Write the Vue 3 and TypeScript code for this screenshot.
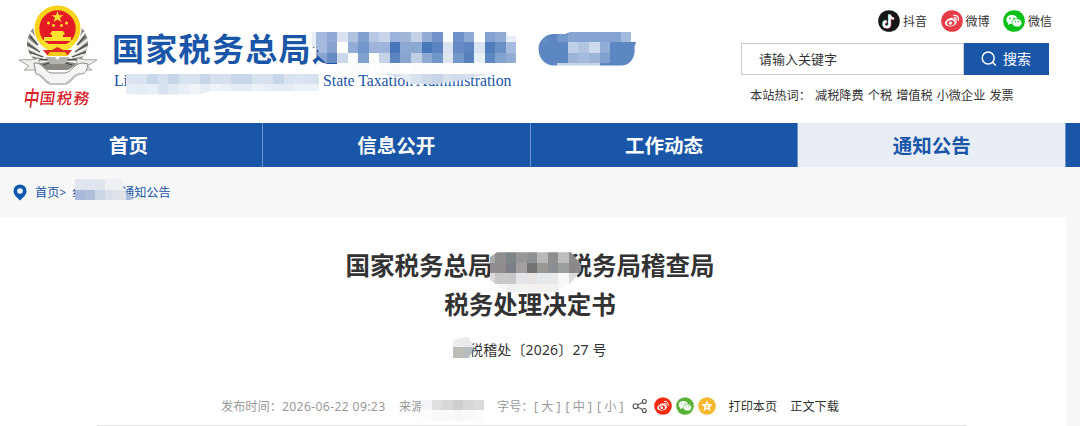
<script setup lang="ts">
interface Mosaic {
  id: string;
  x: number;
  y: number;
  cell: number;
  clip: string;
  rows: string[][];
}

interface SocialLink {
  icon: "douyin" | "weibo" | "wechat";
  color: string;
  label: string;
}

const socials: SocialLink[] = [
  { icon: "douyin", color: "#161616", label: "抖音" },
  { icon: "weibo", color: "#e73d48", label: "微博" },
  { icon: "wechat", color: "#0abf18", label: "微信" },
];

const hotWords = ["减税降费", "个税", "增值税", "小微企业", "发票"];

const navItems = [
  { label: "首页", active: false },
  { label: "信息公开", active: false },
  { label: "工作动态", active: false },
  { label: "通知公告", active: true },
];

const fontSizes = ["大", "中", "小"];

const mosaics: Mosaic[] = [
  {
    id: "site-name",
    x: 305.8,
    y: 31.5,
    cell: 10.52,
    clip: "M312 31.5H506L509 36H516V63H505L492 73L464 80L437 84H411L400 77L370 72H337V63H326L316 54L319 51L312 46Z",
    rows: [
      ["#e8eef7", "#a6b9dc", "#91a9d4", "#dae2f1", "#afc3e1", "#80a0d0", "#b7c8e4", "#c8d5ea", "#9bb3da", "#a0b7da", "#c4d1e7", "#92acd5", "#7193c9", "#fbfcfe", "#6d91c8", "#8faad4", "#fcfdfe", "#83a2d1", "#91abd5", "#e6edf7"],
      ["#e8eef7", "#a6b9dc", "#89a3d1", "#ffffff", "#91abd5", "#7497cb", "#9eb4da", "#9eb4da", "#4876ba", "#8da9d3", "#8ba8d2", "#4978ba", "#5b84c0", "#dbe3f1", "#648bc4", "#5c85c1", "#dae3f0", "#4f7dbc", "#6b90c6", "#a6bbdd"],
      ["#c7d4e9", "#88a5d1", "#648bc3", "#cbd8ea", "#fafcfe", "#80a1d0", "#fdfefe", "#c5d3e8", "#5c84bf", "#88a5d0", "#c1cfe4", "#8eaad2", "#7196c8", "#dde5f1", "#7497c9", "#5681bd", "#e9eff7", "#5d87c1", "#82a2d0", "#94add5"],
      ["#ffffff", "#ffffff", "#ffffff", "#fdfdfe", "#fbfcfd", "#fafbfd", "#ffffff", "#fdfdfe", "#fbfcfe", "#ffffff", "#fdfdfe", "#fdfdfe", "#fdfdfe", "#fcfdfe", "#fdfdfe", "#fdfdfe", "#fdfdfe", "#fdfdfe", "#fdfdfe", "#fdfdfe"],
      ["#ffffff", "#ffffff", "#ffffff", "#ffffff", "#ffffff", "#ffffff", "#cfdbeb", "#cfdbeb", "#d7e1ee", "#e5ebf5", "#d9e2ef", "#ced9ea", "#c6d3e8", "#d6dfed", "#d1dbeb", "#d4deed", "#dce4f0", "#eef2f8", "#ffffff", "#ffffff"],
    ],
  },
  {
    id: "latin-name",
    x: 126,
    y: 73.5,
    cell: 10.52,
    clip: "M126 73.5H319V91H212L198 94.5H125.5V77Z",
    rows: [
      ["#dbe5f1", "#dbe5f1", "#c8d6e9", "#d6e1ef", "#c7d5e9", "#d7e2ef", "#d7e2ef", "#c7d6e9", "#d6e1ef", "#d6e1ef", "#c7d6e8", "#c7d6e8", "#d8e3f0", "#d8e3f0", "#c7d5e8", "#d9e3f0", "#dbe5f1", "#d7e1ef", "#d8e2ef"],
      ["#e8eef6", "#e5ecf5", "#e8eef6", "#d9e3f0", "#e1e9f3", "#e8eef6", "#f0f4f9", "#e8eef6", "#eef3f9", "#eaf0f7", "#e5ecf5", "#e5ecf5", "#edf2f8", "#e8eef6", "#e5ecf5", "#e5ecf5", "#edf2f8", "#edf2f8", "#edf2f8"],
    ],
  },
  {
    id: "badge",
    x: 536,
    y: 31.5,
    cell: 10.6,
    clip: "M554 65.5C545 65.5 538.5 58 538.5 49S546 34 554 34H565L571 31.5H632V42H636L634.5 47C636 57 630 65.5 622 65.5Z",
    rows: [
      ["#668ec5", "#5c87c3", "#7297cb", "#86a4d2", "#84a3d2", "#84a3d2", "#84a3d2", "#84a3d2", "#a5bbdd", "#ffffff"],
      ["#5c87c3", "#5c87c3", "#5c87c3", "#bfcfe5", "#b0c3df", "#cddaeb", "#91add5", "#5c87c3", "#5c87c3", "#5c87c3"],
      ["#5c87c3", "#5c87c3", "#5c87c3", "#9bb4d8", "#a5bbdb", "#9bb4d8", "#80a0ce", "#5c87c3", "#5c87c3", "#5c87c3"],
      ["#5c87c3", "#5c87c3", "#c6d4e9", "#c6d4e9", "#c6d4e9", "#c6d4e9", "#5c87c3", "#5c87c3", "#5c87c3", "#5c87c3"],
    ],
  },
  {
    id: "crumb",
    x: 74.7,
    y: 179.3,
    cell: 10.2,
    clip: "M75 179.3H122.5V189.5L134 199L130 200H75Z",
    rows: [
      ["#dfe4ee", "#dfe4ee", "#e0e5ed", "#eef0f3", "#eef0f3", "#f5f5f6"],
      ["#a9b9db", "#b0bedb", "#ccd6e6", "#dce0e8", "#e0e2e8", "#acbbdd"],
    ],
  },
  {
    id: "heading",
    x: 484.5,
    y: 252.3,
    cell: 10.5,
    clip: "M497 252.3H571L581 264V271L570 283.5L557 292H504L490 279.5V257Z",
    rows: [
      ["#aaa9aa", "#918f91", "#7e8589", "#969797", "#8d9191", "#b8b8b8", "#8e8d8f", "#bdbfbf", "#8c8b8d", "#8c8b8d"],
      ["#918c91", "#8f8b8e", "#7c7e86", "#a5a09f", "#747473", "#9a9895", "#8a8f95", "#9ba09f", "#8c878b", "#8f898d"],
      ["#dcdbdc", "#c8c8c9", "#c8c8c9", "#e2e5ea", "#e7e4e1", "#e4e9ee", "#e8e9eb", "#f6f8f8", "#dfdcdf", "#dfdcdf"],
      ["#f5f5f5", "#f5f5f5", "#f1f1f1", "#f3f3f3", "#f1f1f1", "#f1f1f1", "#f1f1f1", "#f8f8f8", "#f8f8f8", "#f8f8f8"],
    ],
  },
  {
    id: "number",
    x: 452.5,
    y: 336.5,
    cell: 10.5,
    clip: "M453 340L468 336.5L474 347L469 358H452.5Z",
    rows: [
      ["#ececec", "#e9e9e9", "#ececec"],
      ["#bfbbb7", "#b8bdc0", "#d9d9d9"],
    ],
  },
  {
    id: "source",
    x: 421,
    y: 399.7,
    cell: 10.5,
    clip: "M421 399.7H484V421H421Z",
    rows: [
      ["#f3f5f8", "#dfdfdf", "#d8d8d8", "#ceced0", "#d8d8d8", "#dadcdc"],
      ["#fcfcfc", "#f8f8f8", "#f9f9f9", "#f7f7f7", "#f9f9f9", "#fbfbfb"],
    ],
  },
];
</script>

<template>
  <div class="page">
    <header class="header">
      <div class="brand">
        <svg class="emblem" viewBox="0 0 82 82" width="82" height="82">
          <path d="M15 24C3 40 10 54 29 66H50C69 55 76 39 64 24L58 50L40 60L21 50Z" fill="#8b8984" />
          <g fill="none" stroke="#f0efea" stroke-width="2.6" stroke-linecap="round">
            <path d="M13 29l6 8M10 36l10 8M10 44l13 6M14 51l13 3M21 58l12-2" />
            <path d="M66 29l-6 8M69 36l-10 8M69 44l-13 6M65 51l-13 3M58 58l-12-2" />
          </g>
          <g fill="none" stroke="#4b4946" stroke-width="1.3">
            <path d="M12 32l8 9M9 40l13 8M11 48l14 5M17 55l13 1M25 61l9-3" />
            <path d="M67 32l-8 9M70 40l-13 8M68 48l-14 5M62 55l-13 1M54 61l-9-3" />
          </g>
          <circle cx="39.500" cy="24.500" r="23" fill="#f8d319" />
          <circle cx="39.500" cy="24.500" r="18.200" fill="#e41b25" />
          <path d="m39.500 7 1.400 4.200h4.600l-3.600 2.600 1.400 4.200-3.800-2.600-3.800 2.600 1.400-4.200-3.600-2.600h4.600Z" fill="#fce12d" />
          <g fill="#fce12d">
            <circle cx="30.500" cy="19" r="1.500" />
            <circle cx="35.500" cy="21.500" r="1.400" />
            <circle cx="43.500" cy="21.500" r="1.400" />
            <circle cx="48.500" cy="19" r="1.500" />
            <path d="M34 27h11l2 3-2 1v2h8v4H26v-4h8v-2l-2-1Z" />
            <path d="M22 35l9 5h17l9-5-4 9-8 3-5.500-3-5.500 3-8-3Z" />
          </g>
          <path d="M25 46h9l5.500-3 5.500 3h9l-4 5-8 1h-5l-8-1Z" fill="#e12a23" />
          <path d="M32 48h15l3 4H29Z" fill="#f5ca18" />
          <path d="M28 53h9l2.500 3 2.500-3h9l-4 7H32Z" fill="#b5b3ad" />
          <path d="M1 56c7-1 11 1 20-2v12H6l5-4Z" fill="#eeeeeb" stroke="#a5a4a0" />
          <path d="M79 56c-7-1-11 1-20-2v12h15l-5-4Z" fill="#eeeeeb" stroke="#a5a4a0" />
          <path d="M16 59c9-1 11 9 17 10h14c7-1 9-10 18-10l5 1c-1 7-3 10-8 10-6 1-9 9-14 10H32c-6-1-8-10-14-10Z" fill="#f5f5f3" stroke="#8c8b87" />
          <path d="M18 70c7 0 8 8 14 9M62 70c-7 0-8 8-14 9" fill="none" stroke="#c0bfbc" stroke-width="2" />
        </svg>
        <div class="emblem-name">
          <span>中</span><span>国</span><span>税</span><span>務</span>
        </div>
      </div>
      <div class="site-title">
        <div class="site-name">国家税务总局辽</div>
        <div class="latin-name">
          <span class="latin-start">Li</span>
          <span>State Taxation Administration</span>
        </div>
      </div>
      <div class="tools">
        <ul class="socials">
          <li v-for="item in socials" :key="item.icon">
            <svg viewBox="0 0 22 22" width="22" height="22">
              <circle cx="11" cy="11" r="10.8" :fill="item.color" />
              <g v-if="item.icon === 'douyin'" fill="none" stroke-width="2.2">
                <path d="M11 4.2v9.6a2.9 2.9 0 1 1-3-2.8M11 4.5c.4 2.5 2 3.6 4.2 3.8" stroke="#48dce0" />
                <path d="M12.2 5v9.6a2.9 2.9 0 1 1-3-2.8M12.2 5.2c.4 2.5 2 3.6 4.2 3.8" stroke="#ed4b65" />
                <path d="M11.6 4.6v9.6a2.9 2.9 0 1 1-3-2.8M11.6 4.8c.4 2.5 2 3.6 4.2 3.8" stroke="#fff" />
              </g>
              <use v-else-if="item.icon === 'weibo'" href="#glyph-weibo" :color="item.color" />
              <use v-else href="#glyph-wechat" :color="item.color" />
            </svg>
            <span>{{ item.label }}</span>
          </li>
        </ul>
        <div class="search">
          <div class="search-input">请输入关键字</div>
          <div class="search-button">
            <svg viewBox="0 0 16 16" width="16" height="16" fill="none" stroke="#fff" stroke-width="1.5">
              <circle cx="7.2" cy="7" r="6" />
              <path d="m11.4 11.2 3.4 3.3" />
            </svg>
            <span>搜索</span>
          </div>
        </div>
        <div class="hot-words">
          <span class="hot-label">本站热词：</span>
          <span v-for="word in hotWords" :key="word">{{ word }}</span>
        </div>
      </div>
    </header>

    <nav class="nav">
      <div
        v-for="item in navItems"
        :key="item.label"
        class="nav-item"
        :class="{ active: item.active }"
      >
        {{ item.label }}
      </div>
    </nav>

    <div class="breadcrumb">
      <svg viewBox="0 0 14 17" width="14" height="17">
        <path d="M7 .4A6.5 6.5 0 0 0 .5 6.9C.5 11 4 13.5 7 16.4 10 13.5 13.5 11 13.5 6.9A6.5 6.5 0 0 0 7 .4Z" fill="#0d59ae" />
        <circle cx="7" cy="7" r="2.8" fill="#f7f7f7" />
      </svg>
      <span class="crumb-home">首页&gt;</span>
      <span class="crumb-hidden">纟</span>
      <span>通知公告</span>
    </div>

    <main class="article">
      <h1 class="heading">
        <span class="heading-line"><span>国家税务总局</span><span>税务局稽查局</span></span>
        <span>税务处理决定书</span>
      </h1>
      <div class="doc-number">税稽处〔2026〕27 号</div>
      <div class="meta">
        <span class="date">发布时间：<span class="date-value">2026-06-22 09:23</span></span>
        <span class="source">来源：</span>
        <span class="size-label">字号：</span>
        <span v-for="size in fontSizes" :key="size" class="size">[ {{ size }} ]</span>
        <svg class="share" viewBox="0 0 16 16" width="16" height="16" fill="none" stroke="#555" stroke-width="1.1">
          <circle cx="3.5" cy="8.2" r="2.4" />
          <circle cx="12.3" cy="3.5" r="2" />
          <circle cx="12.3" cy="12.5" r="2" />
          <path d="m5.7 7.1 4.8-2.6M5.7 9.3l4.8 2.3" />
        </svg>
        <svg class="share-icon" viewBox="0 0 22 22" width="18" height="18">
          <circle cx="11" cy="11" r="10.8" fill="#f72b12" />
          <use href="#glyph-weibo" color="#f72b12" />
        </svg>
        <svg class="share-icon" viewBox="0 0 22 22" width="18" height="18">
          <circle cx="11" cy="11" r="10.8" fill="#57b236" />
          <use href="#glyph-wechat" color="#57b236" />
        </svg>
        <svg class="share-icon" viewBox="0 0 22 22" width="18" height="18">
          <circle cx="11" cy="11" r="10.8" fill="#f6b82d" />
          <path d="m11 4.2 2 4.500 4.900.4-3.700 3.200 1.100 4.800-4.300-2.500-4.300 2.500 1.100-4.800-3.700-3.200 4.900-.4Z" fill="#fff" />
          <path d="M9.200 10.200h3.600l-3.200 2.800h3.400" fill="none" stroke="#f6b82d" stroke-width=".8" />
        </svg>
        <span class="action">打印本页</span>
        <span class="action">正文下载</span>
      </div>
    </main>

    <svg class="mosaics" viewBox="0 0 1080 426" width="1080" height="426">
      <defs>
        <g id="glyph-weibo">
          <path d="M9.3 8.1c1.5-.7 2.8-.4 2.5 1 2.4-.7 3.2.2 2.6 1.4 1.5.5 1.8 1.7.9 3.1-1.8 2.8-6.6 3.9-9.6 2.2-3.5-2-1.4-6 3.6-7.7Z" fill="#fff" />
          <ellipse cx="9.7" cy="13" rx="3.8" ry="2.7" fill="currentColor" transform="rotate(-9 9.7 13)" />
          <circle cx="9.4" cy="13.1" r="1.7" fill="#fff" />
          <path d="M12.7 5.4c3.1-.6 5.5 1.8 4.6 5M13 7.7c1.6-.3 2.6.6 2.3 2.1" fill="none" stroke="#fff" stroke-width="1.2" stroke-linecap="round" />
        </g>
        <g id="glyph-wechat">
          <path d="M9 5c-3.3 0-5.7 2-5.7 4.6 0 1.5.8 2.8 2 3.6l-.5 1.7 2-1c4 .9 7.7-1.2 7.8-4.3C14.6 7 12.2 5 9 5Z" fill="#fff" />
          <path d="M14 8.7c-2.9 0-5 1.8-5 4.1s2.1 4.1 5 4.1l1.3-.2 1.8 1-.4-1.5c1.4-.8 2.2-2 2.2-3.4 0-2.3-2.1-4.1-4.9-4.1Z" fill="#fff" stroke="currentColor" stroke-width=".7" />
          <g fill="currentColor">
            <circle cx="7" cy="8.4" r=".8" />
            <circle cx="10.8" cy="8.4" r=".8" />
            <circle cx="12.4" cy="11.8" r=".7" />
            <circle cx="15.7" cy="11.8" r=".7" />
          </g>
        </g>
        <clipPath v-for="m in mosaics" :id="`clip-${m.id}`" :key="m.id">
          <path :d="m.clip" />
        </clipPath>
      </defs>
      <g
        v-for="m in mosaics"
        :key="m.id"
        :clip-path="`url(#clip-${m.id})`"
        shape-rendering="crispEdges"
      >
        <template v-for="(row, r) in m.rows" :key="r">
          <rect
            v-for="(color, c) in row"
            :key="c"
            :x="m.x + c * m.cell"
            :y="m.y + r * m.cell"
            :width="m.cell"
            :height="m.cell"
            :fill="color"
          />
        </template>
      </g>
    </svg>
  </div>
</template>

<style>
body {
  background: #f7f7f7;
  overflow: hidden;
}
</style>

<style scoped>
.page {
  position: relative;
  width: 1080px;
  height: 426px;
  overflow: hidden;
  font-family: "Noto Sans", "Noto Sans CJK SC", sans-serif;
  font-size: 12px;
  color: #333;
}

.header {
  display: flex;
  height: 123px;
  background: #fff;
}

.brand {
  width: 112px;
  padding: 4px 0 0 18px;
  box-sizing: border-box;
}

.emblem {
  display: block;
}

.emblem-name {
  display: flex;
  margin: -3px 0 0 6px;
  width: 70px;
  color: #d9232b;
  font-family: "Noto Sans CJK SC", sans-serif;
  font-size: 15.5px;
  font-weight: 500;
  line-height: 28px;
  transform: skewX(-8deg);
}

.emblem-name span {
  width: 17px;
}

.emblem-name span:first-child {
  width: 16px;
  font-size: 21px;
  transform: scaleX(0.75);
  transform-origin: left;
}

.site-title {
  width: 629px;
  padding-top: 25px;
  color: #1a56a8;
}

.site-name {
  white-space: nowrap;
  font-family: "Noto Sans CJK SC", sans-serif;
  font-size: 32px;
  font-weight: 700;
  letter-spacing: 1.3px;
  line-height: 44px;
}

.latin-name {
  display: flex;
  padding: 2px 0 0 2px;
  font-family: "Liberation Serif", serif;
  font-size: 15.75px;
  line-height: 20px;
  white-space: nowrap;
}

.latin-start {
  width: 209px;
}

.tools {
  width: 308px;
}

.socials {
  display: flex;
  margin: 0;
  padding: 10px 0 0 137px;
  list-style: none;
}

.socials li {
  display: flex;
  align-items: center;
  gap: 3px;
  width: 62.5px;
  height: 22px;
  flex: none;
  white-space: nowrap;
}

.search {
  display: flex;
  margin-top: 11px;
  height: 32px;
}

.search-input {
  width: 223px;
  box-sizing: border-box;
  border: 1px solid #ccc;
  padding-left: 17px;
  font-size: 13px;
  line-height: 30px;
}

.search-button {
  display: flex;
  align-items: center;
  gap: 6px;
  width: 84.5px;
  box-sizing: border-box;
  padding-left: 17px;
  background: #1a56a8;
  color: #fff;
  font-size: 14px;
}

.search-button span {
  padding-bottom: 2px;
}

.hot-words {
  display: flex;
  gap: 4px;
  padding-left: 9px;
  font-size: 12.2px;
  line-height: 42px;
  white-space: nowrap;
}

.hot-label {
  width: 61px;
}

.nav {
  display: flex;
  height: 44px;
  background: #1a56a8;
}

.nav-item {
  width: 267.7px;
  box-sizing: border-box;
  border-right: 1px solid #6c94ca;
  color: #fff;
  font-family: "Noto Sans CJK SC", sans-serif;
  font-size: 19.5px;
  font-weight: 700;
  line-height: 43px;
  text-align: center;
}

.nav-item:first-child {
  width: 263px;
  padding-right: 5px;
}

.nav-item.active {
  background: #e8edf6;
  color: #1a56a8;
}

.breadcrumb {
  display: flex;
  align-items: center;
  height: 50px;
  padding-left: 13px;
  background: #f7f7f7;
  color: #1a56a8;
  font-size: 12.2px;
}

.crumb-home {
  width: 37px;
  margin-left: 8px;
}

.crumb-hidden {
  width: 50px;
}

.article {
  width: 1066px;
  height: 209px;
  box-sizing: border-box;
  padding-top: 28px;
  background: #fff;
}

.heading {
  display: flex;
  flex-direction: column;
  align-items: center;
  width: 1060px;
  margin: 0;
  font-family: "Noto Sans CJK SC", sans-serif;
  font-size: 24.5px;
  font-weight: 700;
  line-height: 39px;
}

.heading-line {
  display: flex;
  gap: 75px;
}

.doc-number {
  margin-left: 469px;
  padding-top: 13px;
  font-size: 14px;
  letter-spacing: 0.15px;
  line-height: 28px;
}

.meta {
  display: flex;
  align-items: center;
  width: 869px;
  height: 40px;
  box-sizing: border-box;
  margin: 22px 0 0 97px;
  padding-left: 124px;
  border-bottom: 1px solid #e3e3e3;
  color: #999;
  font-size: 12.2px;
  white-space: nowrap;
}

.date {
  width: 178px;
}

.date-value {
  letter-spacing: 0.35px;
}

.source {
  width: 98px;
}

.size-label {
  width: 37px;
}

.size {
  width: 31.5px;
}

.share {
  margin: 0 6px 0 3px;
}

.share-icon {
  margin-right: 4px;
}

.action {
  margin-left: 9px;
  margin-right: 4px;
  color: #333;
}

.mosaics {
  position: absolute;
  top: 0;
  left: 0;
}
</style>
